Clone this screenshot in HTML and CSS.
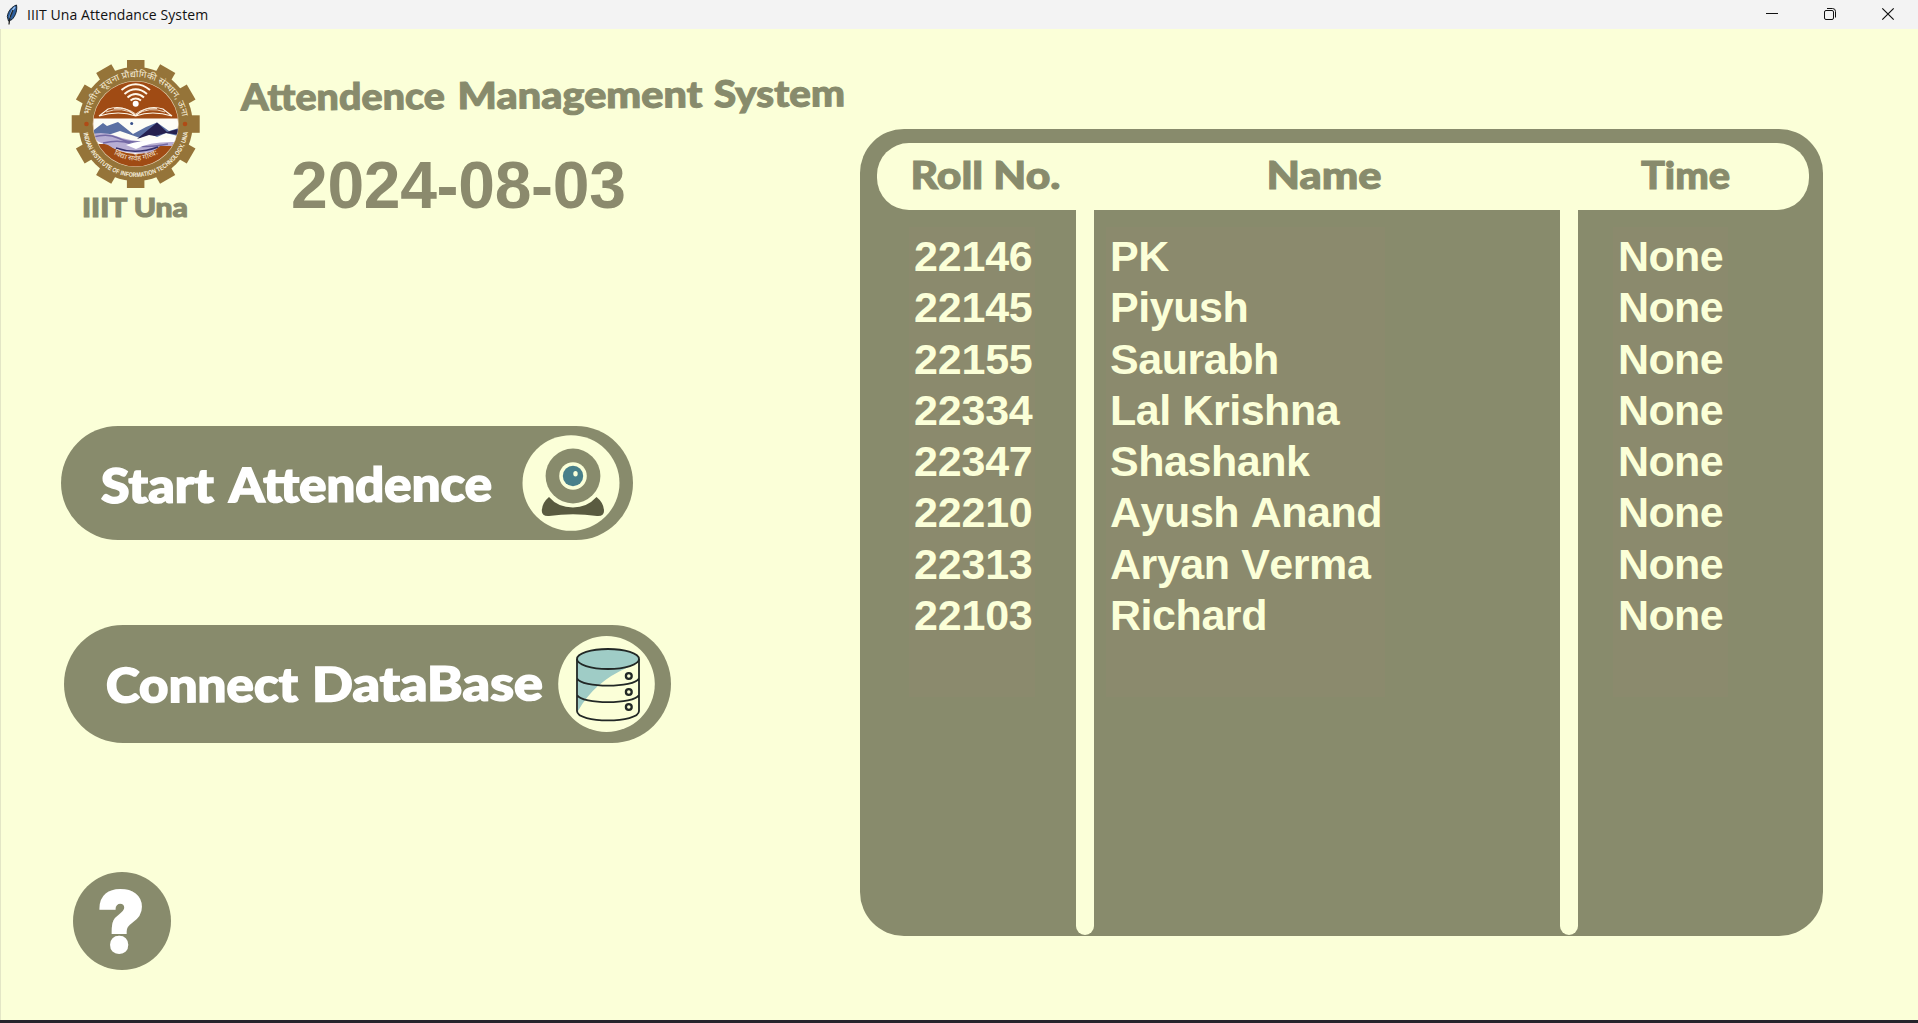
FILE: index.html
```html
<!DOCTYPE html>
<html lang="en">
<head>
<meta charset="utf-8">
<title>IIIT Una Attendance System</title>
<link rel="stylesheet" href="styles.css">
</head>
<body>
<header class="titlebar">
  <svg class="feather" viewBox="0 0 14 22" width="14" height="22">
    <path d="M11.500 1C7 2.500 3 7 2.300 12.500L3.500 17L7 15.500C10.500 12 12.500 6 11.500 1Z" fill="#2d5f9e" stroke="#15202c" stroke-width="1"/>
    <path d="M10 3C7 6 5.500 10 4.800 14" stroke="#9cc3ee" stroke-width="1.600" fill="none"/>
    <path d="M8 6C5.500 11 4.200 15 4 20.500" stroke="#222" stroke-width="1.200" fill="none"/>
  </svg>
  <span class="titlebar-text">IIIT Una Attendance System</span>
  <div class="controls">
    <svg viewBox="0 0 12 12" width="12" height="12"><path d="M0 5.500H12" stroke="#111"/></svg>
    <svg viewBox="0 0 12 12" width="12" height="12" fill="none" stroke="#111"><rect x=".5" y="2.500" width="9" height="9" rx="1.500"/><path d="M3 .5H8.500Q11.500 .5 11.500 3.500V9.500"/></svg>
    <svg viewBox="0 0 12 12" width="12" height="12"><path d="M.3 .3L11.700 11.700M11.700 .3L.3 11.700" stroke="#111" stroke-width="1.200"/></svg>
  </div>
</header>
<main class="app">
  <section class="left">
    <div class="top">
      <svg class="brand" viewBox="70 60 132 162" width="132" height="162">
        <defs>
          <path id="arcTop" d="M88.700 124A47 47 0 0 1 182.700 124"/>
          <path id="arcBottom" d="M82.700 124A53 53 0 0 0 188.700 124"/>
          <path id="arcMotto" d="M104 147Q135.700 174 167 147"/>
          <rect id="tooth" x="127" y="60" width="17.500" height="20"/>
          <clipPath id="disc"><circle cx="135.700" cy="124" r="42.500"/></clipPath>
        </defs>
        <g fill="#957439">
          <circle cx="135.700" cy="124" r="57"/>
          <use href="#tooth"/>
          <use href="#tooth" transform="rotate(30 135.700 124)"/>
          <use href="#tooth" transform="rotate(60 135.700 124)"/>
          <use href="#tooth" transform="rotate(90 135.700 124)"/>
          <use href="#tooth" transform="rotate(120 135.700 124)"/>
          <use href="#tooth" transform="rotate(150 135.700 124)"/>
          <use href="#tooth" transform="rotate(180 135.700 124)"/>
          <use href="#tooth" transform="rotate(210 135.700 124)"/>
          <use href="#tooth" transform="rotate(240 135.700 124)"/>
          <use href="#tooth" transform="rotate(270 135.700 124)"/>
          <use href="#tooth" transform="rotate(300 135.700 124)"/>
          <use href="#tooth" transform="rotate(330 135.700 124)"/>
        </g>
        <circle cx="135.700" cy="124" r="43" fill="#e9dcc0"/>
        <g clip-path="url(#disc)">
          <rect x="90" y="80" width="92" height="90" fill="#a04b14"/>
          <path d="M90 118.500H182V144H160Q150 154 135 154Q118 153 108 144H90Z" fill="#fdfdf6"/>
          <path d="M90 133L103 123L107 126L118 122L133 134L146 127L157 122.500L169 131L182 127V137L166 133L157 137L148 133L140 138L120 131L108 135L90 134Z" fill="#5b70a3"/>
          <path d="M137 139L157 122.500L167 132L182 128L180 135L166 133L155 136L149 135Z" fill="#25204f"/>
          <path d="M92 134Q104 131 116 136T150 142L179 138L176 146H160Q152 155 135 153Q117 152 108 145Q94 142 92 134Z" fill="#b7aed3"/>
          <path d="M93 137Q108 133 118 138T140 142M103 143Q120 139 132 144T168 144" stroke="#7369a5" stroke-width="1.600" fill="none"/>
          <path d="M126 145Q140 140 180 137L177 142Q150 141 136 149Z" fill="#fff"/>
          <path d="M116 148Q136 155 158 147" stroke="#35306a" stroke-width="1.500" fill="none"/>
          <circle cx="131.700" cy="123.500" r="1.500" fill="#38508c"/>
        </g>
        <g fill="none" stroke="#fff7e8">
          <path d="M121.500 90Q135.700 78.500 150 90M124.500 94Q135.700 84.500 147 94M127.500 97.500Q135.700 90.500 144 97.500M130.500 100.500Q135.700 96.500 141 100.500" stroke-width="2"/>
          <path d="M135.700 116Q124 104 108 109L99 116Q119 110 135.700 116Q152 110 172 116L163 109Q147 104 135.700 116" stroke-width="1.100"/>
          <path d="M106 112Q122 106 135.700 115Q149 106 165 112M114 108.500Q127 107 135.700 114Q144 107 157 108.500" stroke-width=".8"/>
        </g>
        <circle cx="135.700" cy="103.800" r="3" fill="#fff"/>
        <circle cx="86.500" cy="124" r="2.300" fill="#b04b16"/>
        <circle cx="185" cy="124" r="2.300" fill="#b04b16"/>
        <text class="ring-hi"><textPath href="#arcTop" startOffset="9" textLength="131" lengthAdjust="spacingAndGlyphs">भारतीय सूचना प्रौद्योगिकी संस्थान, ऊना</textPath></text>
        <text class="ring-en"><textPath href="#arcBottom" startOffset="9" textLength="149" lengthAdjust="spacingAndGlyphs">INDIAN INSTITUTE OF INFORMATION TECHNOLOGY, UNA</textPath></text>
        <text class="ring-motto"><textPath href="#arcMotto" startOffset="12" textLength="47" lengthAdjust="spacingAndGlyphs">विद्या सर्वेह गौरव:</textPath></text>
        <text class="logo-label" x="82" y="217" textLength="106" lengthAdjust="spacingAndGlyphs">IIIT Una</text>
      </svg>
      <div class="heading">
        <svg viewBox="240 78 606 42" width="606" height="42">
          <text class="h-title" y="110.500" transform="rotate(-.4 240 110)"><tspan x="241" textLength="204" lengthAdjust="spacingAndGlyphs">Attendence</tspan> <tspan x="457.500" textLength="245" lengthAdjust="spacingAndGlyphs">Management</tspan> <tspan x="714" textLength="131" lengthAdjust="spacingAndGlyphs">System</tspan></text>
        </svg>
        <div class="date">2024-08-03</div>
      </div>
    </div>
    <div class="pill start">
      <svg viewBox="61 426 572 114" width="572" height="114">
        <text class="pill-text" y="503" transform="rotate(-.3 101 503)"><tspan x="101" textLength="113" lengthAdjust="spacingAndGlyphs">Start</tspan> <tspan x="229" textLength="263" lengthAdjust="spacingAndGlyphs">Attendence</tspan></text>
        <ellipse cx="571" cy="483" rx="48.500" ry="47.800" fill="#fbffd8"/>
        <path d="M549 497Q541.800 503 541.800 511Q542 516.500 549 516Q573 512.500 597 516Q604 516.500 604 511Q604 503 596.500 497Q587 507.500 573 507.500Q558 507.500 549 497Z" fill="#5a5b40"/>
        <circle cx="573" cy="476" r="27.400" fill="#888b6c"/>
        <circle cx="573" cy="476" r="13.800" fill="#fbffd8"/>
        <circle cx="573" cy="476" r="10.200" fill="#48808a"/>
        <ellipse cx="575.500" cy="473.700" rx="2.200" ry="2.700" fill="#fbffd8"/>
      </svg>
    </div>
    <div class="pill connect">
      <svg viewBox="64 625 607 118" width="607" height="118">
        <text class="pill-text" y="702.500" transform="rotate(-.3 106 702)"><tspan x="106" textLength="192" lengthAdjust="spacingAndGlyphs">Connect</tspan> <tspan x="312" textLength="231" lengthAdjust="spacingAndGlyphs">DataBase</tspan></text>
        <ellipse cx="606.500" cy="684" rx="48.300" ry="48" fill="#fbffd8"/>
        <path d="M577 659C577 645.500 639 645.500 639 659Q637 664 627.500 667.500Q594 682 578 711Z" fill="#9fccc6"/>
        <g fill="none" stroke="#222826" stroke-width="1.800">
          <ellipse cx="608" cy="659" rx="31" ry="10"/>
          <path d="M577 659V711C577 723.500 639 723.500 639 711V659M577 678.500C582 688 634 688 639 678.500M577 695C582 704.500 634 704.500 639 695"/>
          <circle cx="628.800" cy="676" r="2.900" stroke-width="2.300"/><circle cx="628.800" cy="692" r="2.900" stroke-width="2.300"/><circle cx="628.800" cy="707" r="2.900" stroke-width="2.300"/>
        </g>
      </svg>
    </div>
    <div class="help">
      <svg viewBox="73 872 98 98" width="98" height="98"><text class="q" x="97.500" y="952" textLength="47" lengthAdjust="spacingAndGlyphs">?</text></svg>
    </div>
  </section>
  <section class="panel">
    <div class="panel-head">
      <svg viewBox="877 143 932 67" width="932" height="67">
        <text class="th" x="910.500" y="189" textLength="150" lengthAdjust="spacingAndGlyphs">Roll No.</text>
        <text class="th" x="1266.500" y="189" textLength="115" lengthAdjust="spacingAndGlyphs">Name</text>
        <text class="th" x="1641" y="189" textLength="89" lengthAdjust="spacingAndGlyphs">Time</text>
      </svg>
    </div>
    <div class="cols">
      <div class="col roll"><div class="list">22146<br>22145<br>22155<br>22334<br>22347<br>22210<br>22313<br>22103</div></div>
      <div class="bar"></div>
      <div class="col name"><div class="list">PK<br>Piyush<br>Saurabh<br>Lal Krishna<br>Shashank<br>Ayush Anand<br>Aryan Verma<br>Richard</div></div>
      <div class="bar"></div>
      <div class="col time"><div class="list">None<br>None<br>None<br>None<br>None<br>None<br>None<br>None</div></div>
    </div>
  </section>
</main>
<footer class="edge"></footer>
</body>
</html>
```
FILE: styles.css
```css
* { box-sizing: border-box; }
body { margin: 0; width: 1918px; height: 1023px; overflow: hidden; background: #fbffd8; display: flex; flex-direction: column; }
svg { display: block; flex: none; overflow: visible; }
.titlebar { height: 29px; background: #f3f3f3; display: flex; align-items: center; padding: 0 24px 0 5px; flex: none; }
.titlebar-text { font: 14px/28px "Open Sans", sans-serif; letter-spacing: .09px; color: #111; margin-left: 8px; white-space: nowrap; }
.controls { margin-left: auto; display: flex; gap: 46px; padding-bottom: 1px; }
.app { height: 991px; display: flex; border-left: 1px solid #e3e6c6; flex: none; }
.left { width: 859px; flex: none; }
.top { display: flex; padding: 31px 0 0 69px; height: 397px; }
.heading { margin-left: 38px; padding-top: 18px; }
.date { font: bold 66px/74px "Liberation Sans", Arial, sans-serif; letter-spacing: -.3px; color: #8b8a6d; margin: 28px 0 0 51px; white-space: nowrap; }
.logo-label, .h-title, .th, .pill-text { font-family: Lato, sans-serif; font-weight: 900; fill: #888b6c; stroke: #888b6c; stroke-width: 1px; }
.logo-label { font-size: 27px; }
.h-title { font-size: 37px; }
.th { font-size: 37.500px; }
.pill-text { font-size: 47.500px; fill: #fff; stroke: #fff; stroke-width: 1.500px; }
.ring-hi { font: 9px "Noto Sans Devanagari", "Noto Sans", sans-serif; fill: #f3e9d2; }
.ring-en { font: bold 6.500px "Liberation Sans", sans-serif; fill: #f6efdd; }
.ring-motto { font: 7px "Noto Sans Devanagari", "Noto Sans", sans-serif; fill: #f3e3cf; }
.pill { background: #888b6c; border-radius: 59px; }
.start { width: 572px; height: 114px; margin-left: 60px; }
.connect { width: 607px; height: 118px; margin: 85px 0 0 63px; }
.help { width: 98px; height: 98px; border-radius: 50%; background: #888b6c; margin: 129px 0 0 72px; }
.q { font: 900 84px Inter, sans-serif; fill: #fff; stroke: #fff; stroke-width: 2px; }
.panel { width: 963px; height: 807px; margin-top: 100px; background: #888b6c; border-radius: 44px; flex: none; }
.panel-head { height: 67px; margin: 14px 13px 0 17px; width: 932px; background: #fbffd8; border-radius: 32px; }
.cols { display: flex; height: 725px; }
.col { padding-top: 17px; }
.bar { width: 18px; height: 725px; background: #fbffd8; border-radius: 0 0 9px 9px; flex: none; }
.list { font: bold 43px/51.250px "Liberation Sans", Arial, sans-serif; font-kerning: none; color: #fbffd8; background: #8b8a6d; height: 470px; padding: 4px 0 0 5px; white-space: nowrap; }
.roll { width: 216px; padding-left: 49px; }
.roll .list { width: 126px; letter-spacing: -.200px; }
.name { width: 466px; padding-left: 12px; }
.name .list { width: 279px; padding-left: 4px; letter-spacing: -.450px; }
.time { width: 245px; padding-left: 35px; }
.time .list { width: 115px; letter-spacing: -.600px; }
.edge { height: 3px; background: #25232b; flex: none; }
```
